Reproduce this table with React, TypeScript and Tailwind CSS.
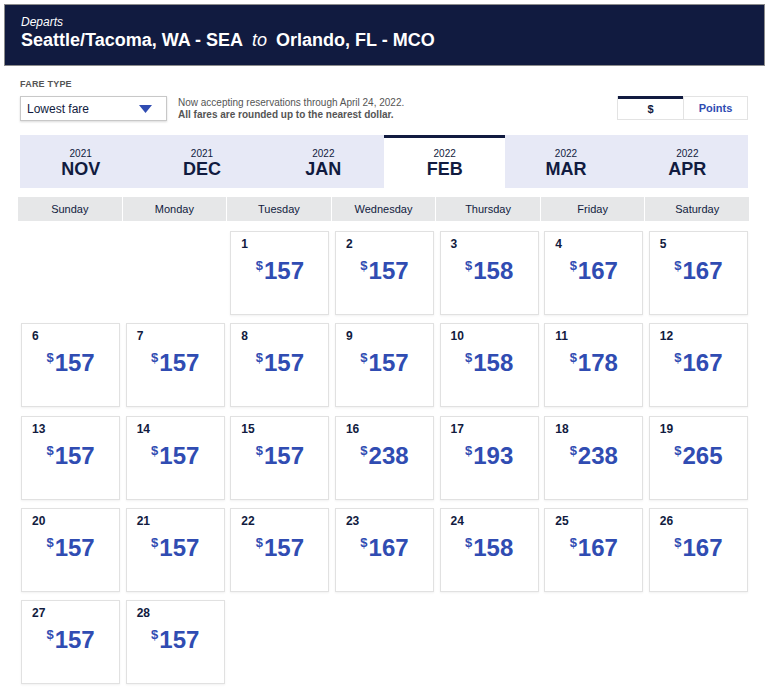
const months = [
  { year: '2021', name: 'NOV' },
  { year: '2021', name: 'DEC' },
  { year: '2022', name: 'JAN' },
  { year: '2022', name: 'FEB', active: true },
  { year: '2022', name: 'MAR' },
  { year: '2022', name: 'APR' },
];

const weekdays = ['Sunday', 'Monday', 'Tuesday', 'Wednesday', 'Thursday', 'Friday', 'Saturday'];

// Feb 2022 starts on a Tuesday
const fares = [
  157, 157, 158, 167, 167,
  157, 157, 157, 157, 158, 178, 167,
  157, 157, 157, 238, 193, 238, 265,
  157, 157, 157, 167, 158, 167, 167,
  157, 157,
];

function DayCell({ day, price }: { day: number; price: number }) {
  return (
    <div className="h-[84px] border border-[#e1e1e1] bg-white shadow-[0_1px_2px_rgba(0,0,0,0.06)] pl-[10px] pt-[5px]">
      <div className="text-[12px] leading-[14px] font-bold text-[#111b40]">{day}</div>
      <div className="mt-[5px] pr-[10px] text-center text-[#304cb2] font-bold">
        <span className="text-[13px] align-[9px] mr-[1px]">$</span>
        <span className="text-[24px] leading-[28px]">{price}</span>
      </div>
    </div>
  );
}

export default function App() {
  const cells: (number | null)[] = [null, null, ...fares.map((_, i) => i + 1)];

  return (
    <div className="w-[770px] h-[694px] bg-white font-['Liberation_Sans',Arial,sans-serif] pt-[4px]">
      {/* Header */}
      <div className="ml-[4px] mr-[5px] h-[62px] border border-[#8c8c8c] bg-[#111b40] px-[16px] pt-[10px] text-white">
        <div className="text-[12px] leading-[14px] italic">Departs</div>
        <div className="text-[18px] leading-[22px] mt-[0px] flex items-baseline">
          <span className="font-bold">Seattle/Tacoma, WA - SEA</span>
          <span className="italic mx-[9px]">to</span>
          <span className="font-bold">Orlando, FL - MCO</span>
        </div>
      </div>

      {/* Fare type / controls */}
      <div className="px-[20px] pt-[13px]">
        <div className="text-[9px] leading-[11px] font-bold text-[#555] tracking-[0.2px]">FARE TYPE</div>
        <div className="mt-[6px] flex items-start">
          <div className="w-[147px] h-[25px] border border-[#c8c8c8] shadow-[0_1px_2px_rgba(0,0,0,0.15)] flex items-center justify-between pl-[6px] pr-[14px]">
            <span className="text-[12px] text-[#111b40]">Lowest fare</span>
            <svg width="13" height="8" viewBox="0 0 13 8">
              <polygon points="0,0 13,0 6.5,8" fill="#304cb2" />
            </svg>
          </div>
          <div className="ml-[11px] mt-[1px] text-[10px] leading-[12px] text-[#555]">
            <div>Now accepting reservations through April 24, 2022.</div>
            <div className="font-bold">All fares are rounded up to the nearest dollar.</div>
          </div>
          <div className="ml-auto mr-[2px] flex h-[24px] border border-[#e3e3e3]">
            <div className="w-[65px] border-t-[3px] border-[#111b40] flex items-center justify-center text-[11px] font-bold text-[#111b40] -mt-px">$</div>
            <div className="w-[64px] border-l border-[#e3e3e3] flex items-center justify-center text-[11px] font-bold text-[#304cb2]">Points</div>
          </div>
        </div>

        {/* Month tabs */}
        <div className="mt-[14px] w-[728px] grid grid-cols-6 bg-[#e7e9f6] h-[53px]">
          {months.map((m) => (
            <div
              key={m.name}
              className={
                m.active
                  ? 'bg-white border-t-[3px] border-[#111b40] flex flex-col items-center justify-center pt-[1px] text-[#111b40]'
                  : 'flex flex-col items-center justify-center pt-[4px] text-[#111b40]'
              }
            >
              <div className="text-[10px] leading-[11px]">{m.year}</div>
              <div className="text-[18px] leading-[20px] font-bold">{m.name}</div>
            </div>
          ))}
        </div>
      </div>

      {/* Weekdays */}
      <div className="ml-[18px] mt-[9px] w-[731px] grid grid-cols-7 gap-x-px">
        {weekdays.map((d) => (
          <div key={d} className="h-[24px] bg-[#e6e7e8] flex items-center justify-center text-[11px] text-[#111b40]">
            {d}
          </div>
        ))}
      </div>

      {/* Calendar grid */}
      <div className="ml-[21px] mt-[10px] w-[727px] grid grid-cols-7 gap-x-[5.5px] gap-y-[8.3px]">
        {cells.map((day, i) =>
          day === null ? <div key={`e${i}`} /> : <DayCell key={day} day={day} price={fares[day - 1]} />
        )}
      </div>
    </div>
  );
}
